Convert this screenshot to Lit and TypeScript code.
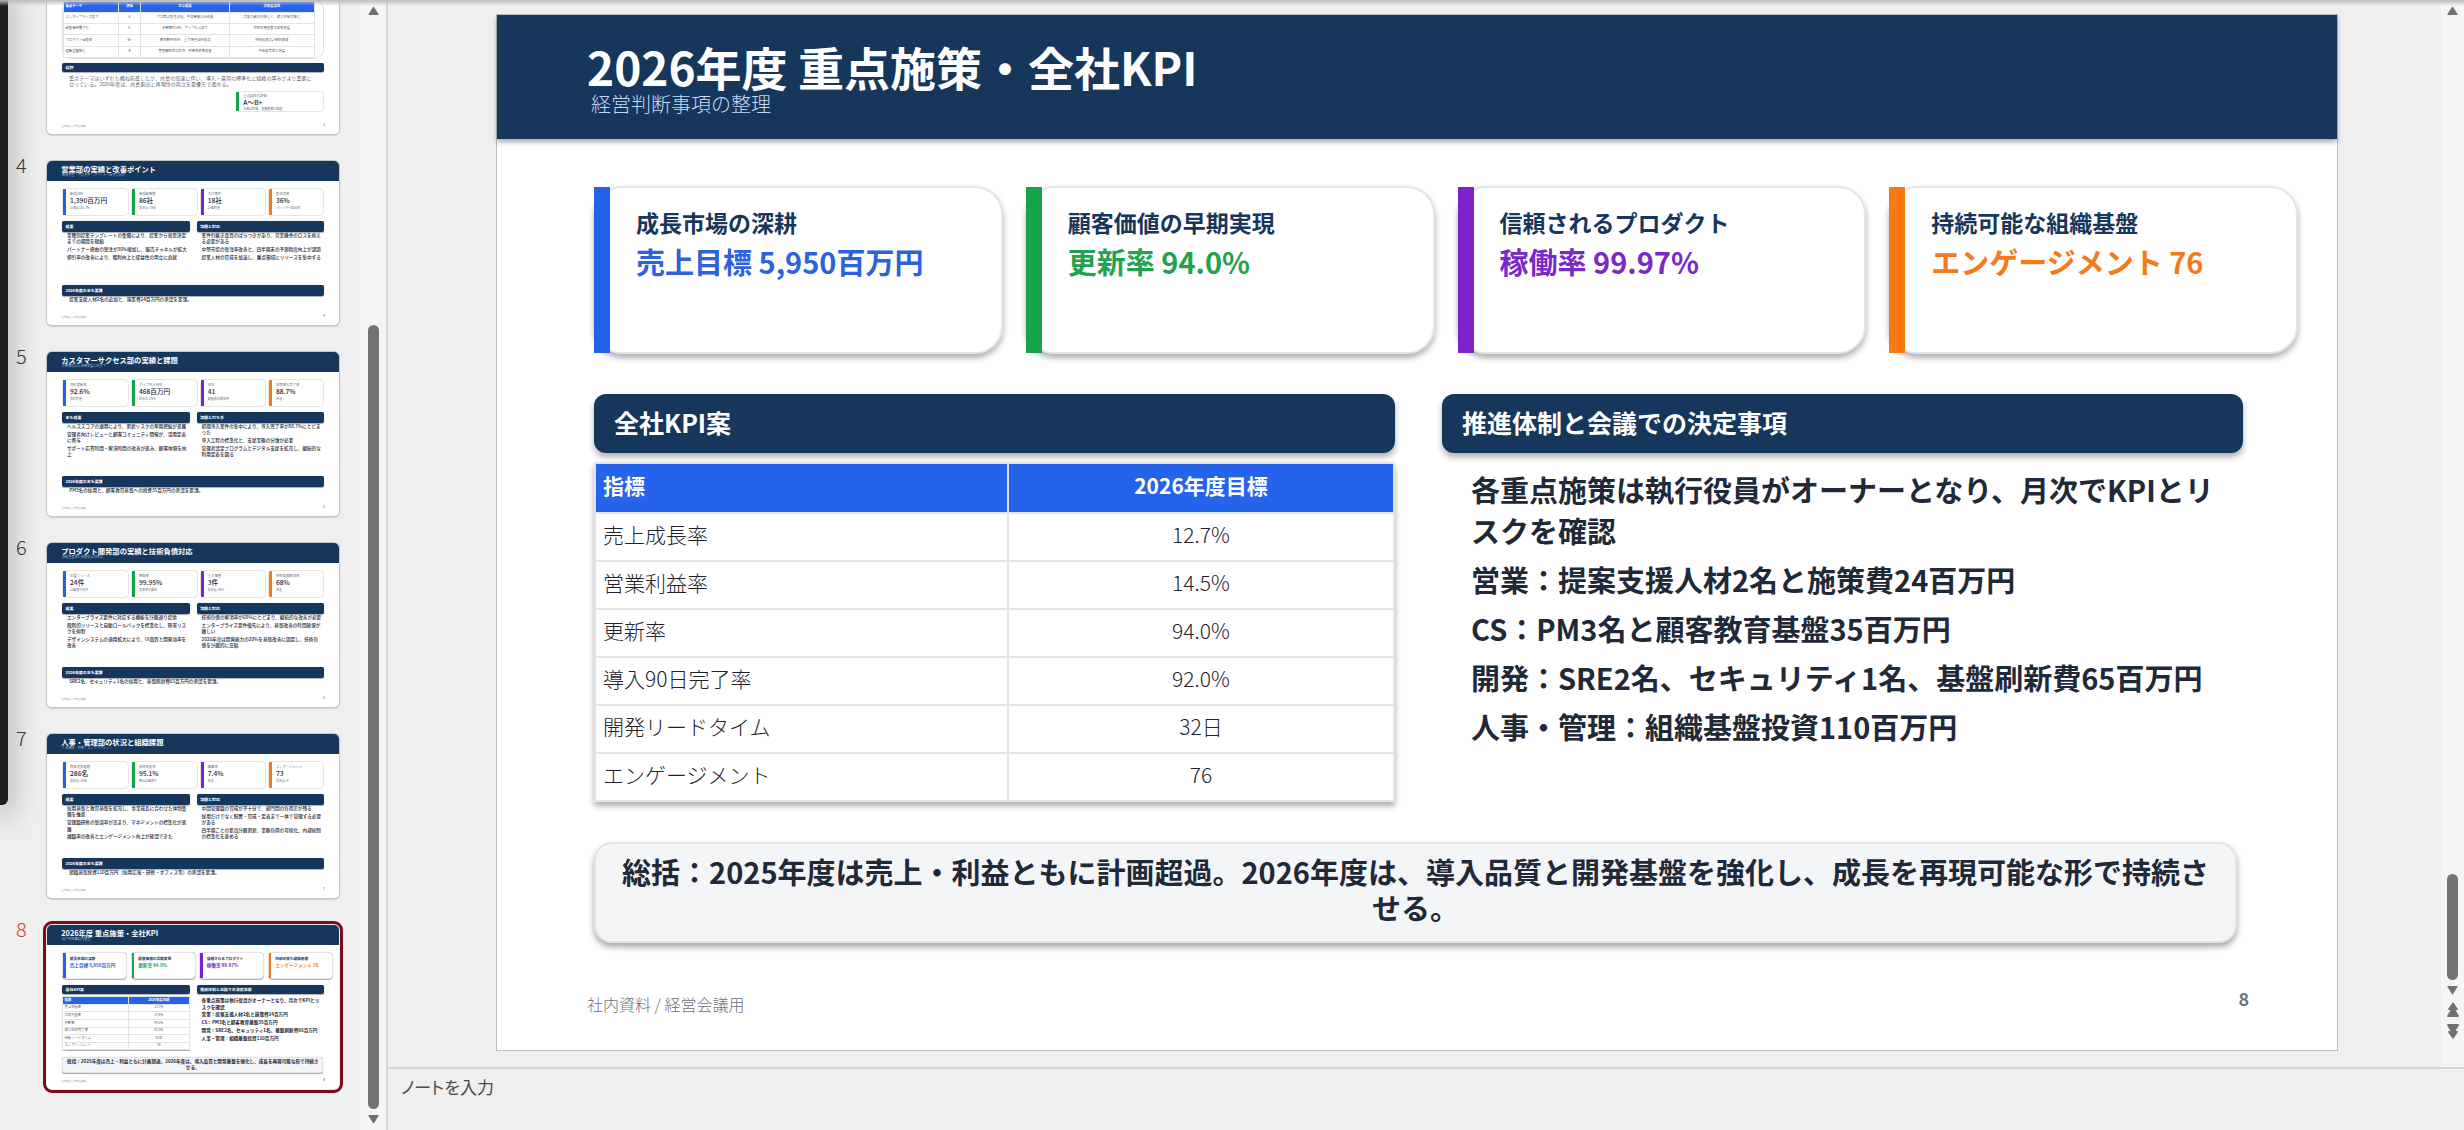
import { LitElement, html, css, nothing } from "lit";
import { customElement, property, state } from "lit/decorators.js";
import { classMap } from "lit/directives/class-map.js";

interface Card {
  label: string;
  value: string;
  note?: string;
}

interface Section {
  title: string;
  points: string[];
}

interface Slide {
  no: number;
  kind: "report" | "goals" | "review";
  title: string;
  subtitle: string;
  cards: Card[];
  sections: Section[];
  closing: string;
  table?: string[][];
}

const TONES = ["blue", "green", "purple", "orange"];

const SLIDES: Slide[] = [
  {
    no: 3,
    kind: "review",
    title: "2025年度 重点テーマの振り返り",
    subtitle: "テーマ別の達成度と課題",
    cards: [{ label: "重点項目の評価", value: "A〜B+", note: "計画は順調、基盤整備が課題" }],
    sections: [{ title: "総評", points: [] }],
    closing:
      "重点テーマはいずれも概ね前進したが、成長の加速に伴い、導入・運用の標準化と組織の厚みがより重要になっている。2026年度は、成長創出と再現性の両立を最優先で進める。",
    table: [
      ["重点テーマ", "評価", "主な成果", "次年度課題"],
      ["エンタープライズ拡大", "A", "大口商談受注18社、平均単価11%改善", "営業工数の標準化と、導入体制の強化"],
      ["顧客価値最大化", "A-", "更新率92.6%、アップセル拡大", "初期活用支援の早期定着"],
      ["プロダクト信頼性", "B+", "稼働率99.95%、重大障害40%削減", "技術負債の計画的解消"],
      ["組織基盤強化", "B", "管理職研修の拡充、採用充足率改善", "中間層育成と定着"],
    ],
  },
  {
    no: 4,
    kind: "report",
    title: "営業部の実績と改善ポイント",
    subtitle: "新規受注・大口案件・パートナー販売の分析",
    cards: [
      { label: "新規ARR", value: "1,390百万円", note: "計画比101.7%" },
      { label: "新規顧客数", value: "86社", note: "前年比+19社" },
      { label: "大口案件", value: "18社", note: "計画超過" },
      { label: "受注効率", value: "36%", note: "パートナー経由率" },
    ],
    sections: [
      {
        title: "成果",
        points: [
          "業種別提案テンプレートの整備により、提案から意思決定までの期間を短縮",
          "パートナー経由の受注が30%増加し、販売チャネルが拡大",
          "値引率の改善により、粗利向上と収益性の両立に貢献",
        ],
      },
      {
        title: "課題と対応",
        points: [
          "案件引継ぎ品質のばらつきがあり、営業機会のロスを抑える必要がある",
          "中堅市場の受注率改善と、四半期末の予測精度向上が課題",
          "提案人材の育成を加速し、重点領域にリソースを集中する",
        ],
      },
    ],
    closing: "提案支援人材2名の追加と、施策費24百万円の承認を要請。",
  },
  {
    no: 5,
    kind: "report",
    title: "カスタマーサクセス部の実績と課題",
    subtitle: "更新率向上と活用定着に向けて",
    cards: [
      { label: "契約更新率", value: "92.6%", note: "目標超過" },
      { label: "アップセルARR", value: "468百万円", note: "前年比+25%" },
      { label: "NPS", value: "41", note: "調査過去最高値" },
      { label: "初期導入完了率", value: "88.7%", note: "改善" },
    ],
    sections: [
      {
        title: "主な成果",
        points: [
          "ヘルススコアの運用により、更新リスクの早期把握が進展",
          "管理者向けレビューと顧客コミュニティ開催が、活用定着に寄与",
          "サポート応答時間・解決時間の改善が進み、顧客体験を向上",
        ],
      },
      {
        title: "課題と打ち手",
        points: [
          "初期導入案件の集中により、導入完了率が88.7%にとどまった",
          "導入工程の標準化と、支援業務の分散が必要",
          "管理者認定プログラムとデジタル支援を拡充し、継続的な利用定着を図る",
        ],
      },
    ],
    closing: "PM3名の採用と、顧客教育基盤への投資35百万円の承認を要請。",
  },
  {
    no: 6,
    kind: "report",
    title: "プロダクト開発部の実績と技術負債対応",
    subtitle: "開発生産性と品質向上の両立",
    cards: [
      { label: "主要リリース", value: "24件", note: "計画通り提供" },
      { label: "稼働率", value: "99.95%", note: "基準値を維持" },
      { label: "重大障害", value: "3件", note: "前年比-40%" },
      { label: "技術負債解消率", value: "68%", note: "改善" },
    ],
    sections: [
      {
        title: "成果",
        points: [
          "エンタープライズ要件に対応する機能を計画通り提供",
          "段階的リリースと自動ロールバックを標準化し、障害リスクを抑制",
          "デザインシステムの適用拡大により、UI品質と開発効率を改善",
        ],
      },
      {
        title: "課題と対応",
        points: [
          "技術負債の解消率が68%にとどまり、継続的な改善が必要",
          "エンタープライズ要件優先により、基盤改善の時間確保が難しい",
          "2026年度は開発能力の20%を基盤改善に固定し、技術負債を計画的に圧縮",
        ],
      },
    ],
    closing: "SRE2名、セキュリティ1名の採用と、基盤刷新費65百万円の承認を要請。",
  },
  {
    no: 7,
    kind: "report",
    title: "人事・管理部の状況と組織課題",
    subtitle: "人員構成・採用・エンゲージメント",
    cards: [
      { label: "期末従業員数", value: "286名", note: "前年比+38名" },
      { label: "採用充足率", value: "95.1%", note: "概ね計画通り" },
      { label: "離職率", value: "7.4%", note: "改善" },
      { label: "エンゲージメント", value: "73", note: "前年比+4" },
    ],
    sections: [
      {
        title: "成果",
        points: [
          "採用基盤と教育基盤を拡充し、事業成長に合わせた体制整備を推進",
          "管理職研修の受講率が高まり、マネジメントの標準化が進展",
          "離職率の改善とエンゲージメント向上が確認できた",
        ],
      },
      {
        title: "課題と対応",
        points: [
          "中間管理職の育成が不十分で、部門間の負荷差が残る",
          "採用だけでなく配置・育成・定着まで一体で管理する必要がある",
          "四半期ごとの要員計画更新、業務負荷の可視化、内部統制の標準化を進める",
        ],
      },
    ],
    closing: "組織基盤投資110百万円（採用広報・研修・オフィス等）の承認を要請。",
  },
  {
    no: 8,
    kind: "goals",
    title: "2026年度 重点施策・全社KPI",
    subtitle: "経営判断事項の整理",
    cards: [
      { label: "成長市場の深耕", value: "売上目標 5,950百万円" },
      { label: "顧客価値の早期実現", value: "更新率 94.0%" },
      { label: "信頼されるプロダクト", value: "稼働率 99.97%" },
      { label: "持続可能な組織基盤", value: "エンゲージメント 76" },
    ],
    sections: [
      { title: "全社KPI案", points: [] },
      {
        title: "推進体制と会議での決定事項",
        points: [
          "各重点施策は執行役員がオーナーとなり、月次でKPIとリスクを確認",
          "営業：提案支援人材2名と施策費24百万円",
          "CS：PM3名と顧客教育基盤35百万円",
          "開発：SRE2名、セキュリティ1名、基盤刷新費65百万円",
          "人事・管理：組織基盤投資110百万円",
        ],
      },
    ],
    closing:
      "総括：2025年度は売上・利益ともに計画超過。2026年度は、導入品質と開発基盤を強化し、成長を再現可能な形で持続させる。",
    table: [
      ["指標", "2026年度目標"],
      ["売上成長率", "12.7%"],
      ["営業利益率", "14.5%"],
      ["更新率", "94.0%"],
      ["導入90日完了率", "92.0%"],
      ["開発リードタイム", "32日"],
      ["エンゲージメント", "76"],
    ],
  },
];

@customElement("deck-slide")
class DeckSlide extends LitElement {
  @property({ attribute: false }) slide!: Slide;

  static styles = css`
    :host {
      display: block;
      color: #1f2937;
    }
    .slide {
      display: flex;
      flex-direction: column;
      box-sizing: border-box;
      aspect-ratio: 16 / 9;
      background: #fff;
    }
    .head {
      box-sizing: border-box;
      height: 124px;
      flex: none;
      padding: 24px 90px 0;
      background: #17365c;
      color: #fff;
      box-shadow: 0 3px 5px rgba(0, 0, 0, 0.35);
    }
    .title {
      margin: 0;
      font-size: 46px;
      line-height: 54px;
      font-weight: 700;
    }
    .subtitle {
      margin: 0;
      padding-left: 4px;
      font-size: 20px;
      line-height: 22px;
      font-weight: 300;
      color: #c4dbf6;
    }
    .body {
      display: flex;
      flex-direction: column;
      flex: 1;
      padding: 47px 0 0 97px;
    }
    .cards {
      display: grid;
      grid-template-columns: repeat(4, 1fr);
      gap: 23px;
      padding-right: 39px;
    }
    .report .cards {
      grid-template-columns: 420px 420px 416px 1fr;
      gap: 14px;
      padding-right: 92px;
    }
    .card {
      display: flex;
      box-sizing: border-box;
      height: 168px;
      border: 2px solid #e3e5e8;
      border-radius: 28px;
      background: #fff;
      box-shadow: 0 4px 6px rgba(0, 0, 0, 0.32);
    }
    .bar {
      flex: none;
      width: 16px;
      margin: -1px 0 -1px -2px;
    }
    .report .bar,
    .review .bar {
      width: 18px;
    }
    .report .card,
    .review .card {
      height: 175px;
      box-shadow: none;
    }
    .text {
      display: flex;
      flex-direction: column;
      padding: 15px 0 0 26px;
    }
    .label {
      font-size: 23px;
      line-height: 38px;
      font-weight: 700;
      color: #17365c;
    }
    .value {
      font-size: 29px;
      line-height: 40px;
      font-weight: 700;
    }
    .report .label,
    .review .label {
      font-size: 21px;
      line-height: 30px;
      font-weight: 400;
      color: #6b7280;
    }
    .report .value,
    .review .value {
      font-size: 42px;
      line-height: 60px;
      font-weight: 500;
      color: #1f2937;
    }
    .note {
      font-size: 19px;
      line-height: 36px;
      color: #6b7280;
    }
    .bar.blue { background: #2460e8; }
    .bar.green { background: #16a34a; }
    .bar.purple { background: #7e22ce; }
    .bar.orange { background: #f97a12; }
    .goals .value.blue { color: #2c62dc; }
    .goals .value.green { color: #1fa34e; }
    .goals .value.purple { color: #7a29c8; }
    .goals .value.orange { color: #f57a1c; }
    .columns {
      display: grid;
      grid-template-columns: 1fr 1fr;
      gap: 47px;
      margin-top: 40px;
      padding-right: 94px;
    }
    .section {
      display: flex;
      flex-direction: column;
    }
    .section-title {
      margin: 0;
      padding: 0 20px 3px;
      border-radius: 12px;
      background: #17365c;
      color: #fff;
      font-size: 25px;
      line-height: 56px;
      font-weight: 700;
      box-shadow: 0 4px 6px rgba(0, 0, 0, 0.32);
    }
    .report .section-title {
      line-height: 66px;
    }
    .points {
      display: flex;
      flex-direction: column;
      gap: 8px;
      margin: 0;
      padding: 16px 12px 0 29px;
      list-style: none;
      font-size: 29px;
      line-height: 41px;
      font-weight: 700;
    }
    .report .points {
      padding-top: 0;
      font-weight: 500;
    }
    .report .columns {
      height: 368px;
      margin-top: 32px;
    }
    .table {
      width: 100%;
      margin-top: 9px;
      border-collapse: collapse;
      table-layout: fixed;
      background: #fff;
      box-shadow: 0 4px 6px rgba(0, 0, 0, 0.32);
    }
    .table th,
    .table td {
      box-sizing: border-box;
      height: 48px;
      padding: 0 7px 6px;
      border: 2px solid #e3e4e6;
      font-size: 21px;
      line-height: 30px;
      text-align: center;
    }
    .table th {
      height: 50px;
      background: #2563eb;
      color: #fff;
      font-weight: 700;
    }
    .table td {
      font-weight: 300;
      color: #1f2328;
    }
    .table .first {
      width: 413px;
      text-align: left;
    }
    .summary {
      box-sizing: border-box;
      min-height: 101px;
      margin: 40px 100px 0 0;
      padding: 9px 20px;
      border: 2px solid #e2e5e8;
      border-radius: 18px;
      background: #f3f5f7;
      box-shadow: 0 4px 6px rgba(0, 0, 0, 0.35);
      font-size: 29px;
      line-height: 36px;
      font-weight: 700;
      text-align: center;
    }
    .request {
      margin-top: 35px;
      padding-right: 96px;
    }
    .request-text {
      margin: 0;
      padding-left: 43px;
      font-size: 29px;
      line-height: 41px;
      font-weight: 500;
    }
    .frame {
      box-sizing: border-box;
      margin: 16px 96px 0 0;
      padding-right: 52px;
      border: 2px solid #dbe0e6;
      border-radius: 60px;
    }
    .frame .table {
      margin-top: 0;
      box-shadow: none;
    }
    .frame .table th,
    .frame .table td {
      height: 71px;
    }
    .frame .first { width: 344px; }
    .frame .rating { width: 139px; }
    .frame .result { width: 561px; }
    .review .section {
      margin-top: 26px;
      padding-right: 96px;
    }
    .review .closing {
      margin: 0;
      padding: 16px 54px 0 42px;
      font-size: 32px;
      line-height: 38px;
      font-weight: 300;
    }
    .review .card {
      width: 555px;
      height: 132px;
      margin: 24px 96px 0 auto;
      border-radius: 22px;
    }
    .review .text {
      padding-top: 14px;
    }
    .review .value {
      line-height: 50px;
    }
    .foot {
      display: flex;
      align-items: flex-start;
      justify-content: space-between;
      padding: 0 88px 28px 90px;
      color: #6b7280;
    }
    .foot-text {
      font-size: 16px;
      line-height: 36px;
      font-weight: 300;
    }
    .foot-no {
      font-size: 18px;
      line-height: 24px;
      font-weight: 700;
    }
  `;

  private card(card: Card, i: number) {
    return html`<div class="card">
      <div class="bar ${TONES[i]}"></div>
      <div class="text">
        <span class="label">${card.label}</span>
        <span class="value ${TONES[i]}">${card.value}</span>
        ${card.note ? html`<span class="note">${card.note}</span>` : nothing}
      </div>
    </div>`;
  }

  private table(rows: string[][]) {
    const columns = ["first", "rating", "result", "issue"];
    const [head, ...rest] = rows;
    return html`<table class="table">
      <thead>
        <tr>${head.map((c, i) => html`<th class=${columns[i]} scope="col">${c}</th>`)}</tr>
      </thead>
      <tbody>
        ${rest.map((r) => html`<tr>${r.map((c, i) => html`<td class=${columns[i]}>${c}</td>`)}</tr>`)}
      </tbody>
    </table>`;
  }

  private section(section: Section, table?: string[][]) {
    return html`<section class="section">
      <h2 class="section-title">${section.title}</h2>
      ${table ? this.table(table) : nothing}
      ${section.points.length
        ? html`<ul class="points">${section.points.map((p) => html`<li>${p}</li>`)}</ul>`
        : nothing}
    </section>`;
  }

  private content(s: Slide) {
    if (s.kind === "review") {
      return html`
        <div class="frame">${this.table(s.table!)}</div>
        <section class="section">
          <h2 class="section-title">${s.sections[0].title}</h2>
          <p class="closing">${s.closing}</p>
        </section>
        ${this.card(s.cards[0], 1)}
      `;
    }
    return html`
      <div class="cards">${s.cards.map((c, i) => this.card(c, i))}</div>
      <div class="columns">
        ${s.sections.map((sec, i) => this.section(sec, i === 0 ? s.table : undefined))}
      </div>
      ${s.kind === "goals"
        ? html`<div class="summary">${s.closing}</div>`
        : html`<section class="request">
            <h2 class="section-title">2026年度の主な要請</h2>
            <p class="request-text">${s.closing}</p>
          </section>`}
    `;
  }

  render() {
    const s = this.slide;
    return html`<article class="slide ${s.kind}">
      <header class="head">
        <h1 class="title">${s.title}</h1>
        <p class="subtitle">${s.subtitle}</p>
      </header>
      <div class="body">${this.content(s)}</div>
      <footer class="foot">
        <span class="foot-text">社内資料 / 経営会議用</span>
        <span class="foot-no">${s.no}</span>
      </footer>
    </article>`;
  }
}

const UP = "M5 1 Q5.500 0 6 1 L10.500 8 Q11 9 10 9 H1 Q0 9 .5 8 Z";

@customElement("app-root")
class AppRoot extends LitElement {
  @state() private current = 8;

  static styles = css`
    :host {
      display: block;
      font-family: "Noto Sans CJK JP", "Noto Sans", sans-serif;
      color: #3b3b3b;
    }
    .app {
      position: relative;
      display: flex;
      height: 100vh;
      overflow: hidden;
      background: #efefef;
    }
    .app::after {
      content: "";
      position: absolute;
      inset: 0 0 auto;
      height: 6px;
      background: linear-gradient(#bcbcbc, rgba(239, 239, 239, 0));
    }
    .window-edge {
      position: absolute;
      inset: -20px auto auto 0;
      width: 8px;
      height: 825px;
      border-radius: 0 0 6px 0;
      background: #1e1e1e;
      box-shadow: 0 12px 28px rgba(0, 0, 0, 0.6);
    }
    .sidebar {
      display: flex;
      box-sizing: border-box;
      flex: none;
      width: 388px;
      border-right: 2px solid #d6d6d6;
    }
    .thumbs {
      display: flex;
      flex: 1;
      flex-direction: column;
      justify-content: flex-end;
      gap: 27px;
      margin: 0;
      padding: 0 0 41px 16px;
      list-style: none;
    }
    .thumb {
      display: flex;
      flex: none;
    }
    .no {
      width: 31px;
      font-size: 20px;
      line-height: 8px;
      font-weight: 300;
    }
    .no.on {
      color: #c4472b;
    }
    .link {
      display: block;
      width: 292px;
      height: 164px;
      overflow: hidden;
      border-radius: 5px;
      background: #fff;
      color: inherit;
      text-decoration: none;
      box-shadow: 0 0 0 1px #c6c6c6, 0 1px 2px rgba(0, 0, 0, 0.4);
    }
    .link.on {
      outline: 3px solid #7a0d1c;
      outline-offset: 1px;
      box-shadow: none;
    }
    .mini {
      width: 1840px;
      zoom: 0.1587;
    }
    .scroll {
      display: flex;
      flex: none;
      flex-direction: column;
      align-items: center;
      box-sizing: border-box;
      width: 26px;
      padding: 6px 0;
      background: #f5f5f5;
    }
    .scroll.main {
      width: 23px;
      padding: 6px 0 28px;
    }
    .arrow {
      display: block;
      padding: 0;
      border: 0;
      background: none;
      line-height: 0;
    }
    .arrow svg {
      display: block;
      fill: #707070;
    }
    .arrow.double {
      margin-top: 7px;
    }
    .grip {
      width: 11px;
      border-radius: 6px;
      background: #737373;
    }
    .sidebar .grip {
      flex: 784;
    }
    .sidebar .before {
      flex: 310;
    }
    .sidebar .after {
      flex: 6;
    }
    .main .before {
      flex: 859;
    }
    .main .grip {
      flex: 106;
    }
    .main .after {
      flex: 6;
    }
    .workspace {
      display: flex;
      flex: 1;
      min-width: 0;
      flex-direction: column;
    }
    .stage {
      display: flex;
      flex: none;
    }
    .canvas {
      flex: 1;
      min-width: 0;
      padding: 14px 103px 16px 108px;
    }
    .page {
      border: 1px solid #bdbdbd;
    }
    .notes {
      flex: 1;
      box-sizing: border-box;
      width: 100%;
      padding: 5px 13px;
      border: 0;
      border-top: 2px solid #d6d6d6;
      outline: 0;
      resize: none;
      background: #efefef;
      color: #3b3b3b;
      font-family: inherit;
      font-size: 17px;
      line-height: 26px;
      font-feature-settings: "palt";
      font-weight: 400;
    }
    .notes::placeholder {
      color: #4a4a4a;
      opacity: 1;
    }
  `;

  private arrow(label: string, down = false) {
    return html`<button class="arrow" type="button" aria-label=${label}>
      <svg width="11" height="9" viewBox="0 0 11 9">
        <path d=${UP} transform=${down ? "rotate(180 5.500 4.500)" : "rotate(0)"}></path>
      </svg>
    </button>`;
  }

  private jump(label: string, step: number) {
    return html`<button
      class="arrow double"
      type="button"
      aria-label=${label}
      @click=${() => this.go(this.current + step)}
    >
      <svg width="12" height="15" viewBox="0 0 12 15">
        <path
          d="M6 0 L11 7 Q11 8 10 8 H8.500 L12 14 Q12 15 11 15 H1 Q0 15 0 14 L3.500 8 H2 Q1 8 1 7 Z"
          transform=${step > 0 ? "rotate(180 6 7.500)" : "rotate(0)"}
        ></path>
      </svg>
    </button>`;
  }

  private go(no: number) {
    if (SLIDES.some((s) => s.no === no)) this.current = no;
  }

  private thumb(s: Slide) {
    const on = s.no === this.current;
    return html`<li class="thumb">
      <span class=${classMap({ no: true, on })}>${s.no}</span>
      <a
        class=${classMap({ link: true, on })}
        href="#slide-${s.no}"
        aria-label=${s.title}
        @click=${() => this.go(s.no)}
      >
        <deck-slide class="mini" .slide=${s}></deck-slide>
      </a>
    </li>`;
  }

  render() {
    const slide = SLIDES.find((s) => s.no === this.current)!;
    return html`<div class="app">
      <nav class="sidebar">
        <ol class="thumbs">${SLIDES.map((s) => this.thumb(s))}</ol>
        <div class="scroll">
          ${this.arrow("上へ")}
          <div class="before"></div>
          <div class="grip"></div>
          <div class="after"></div>
          ${this.arrow("下へ", true)}
        </div>
      </nav>
      <main class="workspace">
        <div class="stage">
          <div class="canvas">
            <div class="page"><deck-slide .slide=${slide}></deck-slide></div>
          </div>
          <div class="scroll main">
            ${this.arrow("上へ")}
            <div class="before"></div>
            <div class="grip"></div>
            <div class="after"></div>
            ${this.arrow("下へ", true)} ${this.jump("前のスライド", -1)}
            ${this.jump("次のスライド", 1)}
          </div>
        </div>
        <textarea class="notes" placeholder="ノートを入力" aria-label="ノートを入力"></textarea>
      </main>
      <div class="window-edge"></div>
    </div>`;
  }
}
